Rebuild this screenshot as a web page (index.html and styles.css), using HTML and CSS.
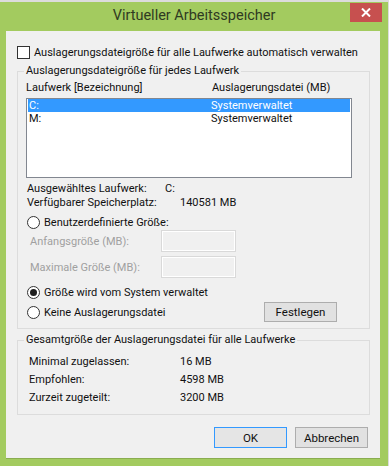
FILE: index.html
```html
<!DOCTYPE html>
<html lang="de">
<head>
    <meta charset="UTF-8">
    <meta name="viewport" content="width=device-width, initial-scale=1.0">
    <title>Virtueller Arbeitsspeicher</title>
    <link rel="stylesheet" href="styles.css">
</head>
<body>
    <div class="window">
        <div class="titlebar">
            <span class="title">Virtueller Arbeitsspeicher</span>
            <span class="close">
                <svg width="10" height="9" viewBox="0 0 10 9">
                    <path d="M1 0.5 L9 8.5 M9 0.5 L1 8.5" stroke="#fff" stroke-width="2" fill="none"/>
                </svg>
            </span>
        </div>
        <div class="client">
            <div class="check-row">
                <span class="checkbox"></span>
                <span>Auslagerungsdateigröße für alle Laufwerke automatisch verwalten</span>
            </div>

            <div class="group">
                <div class="legend">Auslagerungsdateigröße für jedes Laufwerk</div>
                <div class="list-head">
                    <span>Laufwerk [Bezeichnung]</span>
                    <span>Auslagerungsdatei (MB)</span>
                </div>
                <div class="listbox">
                    <div class="list-row selected"><span>C:</span><span>Systemverwaltet</span></div>
                    <div class="list-row"><span>M:</span><span>Systemverwaltet</span></div>
                </div>

                <div class="info">
                    <div class="info-row"><span class="key key-drive">Ausgewähltes Laufwerk:</span><span>C:</span></div>
                    <div class="info-row"><span class="key key-space">Verfügbarer Speicherplatz:</span><span>140581 MB</span></div>
                </div>

                <div class="radio-row first">
                    <span class="radio"></span>
                    <span>Benutzerdefinierte Größe:</span>
                </div>
                <div class="field-row first">
                    <span class="field-label">Anfangsgröße (MB):</span>
                    <span class="field"></span>
                </div>
                <div class="field-row">
                    <span class="field-label">Maximale Größe (MB):</span>
                    <span class="field"></span>
                </div>
                <div class="radio-row checked-row">
                    <span class="radio checked"></span>
                    <span>Größe wird vom System verwaltet</span>
                </div>
                <div class="radio-row last">
                    <span class="radio"></span>
                    <span class="grow">Keine Auslagerungsdatei</span>
                    <button class="btn btn-set">Festlegen</button>
                </div>
            </div>

            <div class="group group-total">
                <div class="legend">Gesamtgröße der Auslagerungsdatei für alle Laufwerke</div>
                <div class="totals">
                    <div class="total-row"><span class="key">Minimal zugelassen:</span><span>16 MB</span></div>
                    <div class="total-row"><span class="key">Empfohlen:</span><span>4598 MB</span></div>
                    <div class="total-row"><span class="key">Zurzeit zugeteilt:</span><span>3200 MB</span></div>
                </div>
            </div>

            <div class="buttons">
                <button class="btn btn-default">OK</button>
                <button class="btn">Abbrechen</button>
            </div>
        </div>
    </div>
</body>
</html>
```

FILE: styles.css
```css
body {
    margin: 0;
    background-color: #dcdcdc;
    font-family: Roboto, "Open Sans", sans-serif;
    font-size: 11px;
    color: #111;
    white-space: nowrap;
}
.window {
    position: relative;
    width: 388px;
    height: 464px;
    margin-top: 2px;
    background-color: #a3cb5f;
    display: flex;
    flex-direction: column;
}
.titlebar {
    height: 29px;
    display: flex;
    align-items: center;
    justify-content: center;
}
.title {
    font-size: 14.5px;
    color: #2f3a22;
    margin-top: -2px;
}
.close {
    position: absolute;
    left: 350px;
    top: 1px;
    width: 32px;
    height: 19px;
    background-color: #c7504f;
    display: flex;
    align-items: center;
    justify-content: center;
}
.client {
    width: 374px;
    height: 428px;
    margin-left: 6px;
    box-sizing: border-box;
    padding: 13px 10px 0 11px;
    background-color: #f0f0f0;
    border-bottom: 1px solid #8aad50;
}
.check-row {
    display: flex;
    align-items: center;
    height: 16px;
    gap: 4px;
}
.checkbox {
    flex-shrink: 0;
    width: 13px;
    height: 13px;
    box-sizing: border-box;
    border: 1px solid #333;
    background-color: #fff;
}
.group {
    margin-top: 11px;
    border: 1px solid #dcdcdc;
    padding-bottom: 6px;
}
.legend {
    width: fit-content;
    margin: -9px 0 0 6px;
    padding: 0 2px;
    line-height: 16px;
    background-color: #f0f0f0;
}
.list-head {
    margin: 1px 0 0 8px;
    line-height: 16px;
    display: grid;
    grid-template-columns: 186px auto;
}
.listbox {
    margin: 2px 0 0 8px;
    width: 326px;
    height: 80px;
    box-sizing: border-box;
    border: 1px solid #828790;
    background-color: #fff;
    padding: 0 1px;
}
.list-row {
    height: 13px;
    line-height: 13px;
    padding-left: 1px;
    display: grid;
    grid-template-columns: 182px auto;
}
.list-row.selected {
    background-color: #3399ff;
    color: #fff;
}
.info {
    margin: 4px 0 0 9px;
}
.info-row {
    display: flex;
    line-height: 14px;
}
.key {
    flex-shrink: 0;
}
.key-drive {
    width: 138px;
}
.key-space {
    width: 153px;
}
.radio-row {
    display: flex;
    align-items: center;
    gap: 4px;
    margin-left: 9px;
    height: 14px;
}
.radio-row.first {
    margin-top: 5px;
}
.radio-row.checked-row {
    margin-top: 7px;
}
.radio-row.last {
    margin-top: 3px;
    height: 20px;
    margin-right: 32px;
}
.grow {
    flex: 1;
}
.radio {
    flex-shrink: 0;
    width: 13px;
    height: 13px;
    box-sizing: border-box;
    border: 1px solid #333;
    border-radius: 50%;
    background-color: #fff;
    display: flex;
    align-items: center;
    justify-content: center;
}
.radio.checked::after {
    content: "";
    width: 7px;
    height: 7px;
    border-radius: 50%;
    background-color: #1f1f1f;
}
.field-row {
    display: flex;
    align-items: center;
    margin: 4px 0 0 12px;
    height: 22px;
}
.field-row.first {
    margin-top: 1px;
}
.field-label {
    width: 131px;
    color: #a0a0a0;
}
.field {
    width: 75px;
    height: 22px;
    box-sizing: border-box;
    border: 1px solid #d9d9d9;
    box-shadow: inset 0 0 0 1px #fff;
    background-color: #f0f0f0;
}
.btn {
    width: 73px;
    height: 21px;
    padding: 0;
    border: 1px solid #adadad;
    background-color: #e1e1e1;
    font-family: inherit;
    font-size: 11.5px;
    color: #111;
}
.btn-set {
    height: 20px;
}
.btn-default {
    border-color: #3399ff;
    background-color: #e5e5e5;
}
.group-total {
    padding-bottom: 7px;
}
.totals {
    margin: 5px 0 0 11px;
}
.total-row {
    display: flex;
    line-height: 18px;
}
.total-row .key {
    width: 151px;
}
.buttons {
    display: flex;
    justify-content: flex-end;
    gap: 8px;
    margin: 12px 2px 0 0;
}
```
